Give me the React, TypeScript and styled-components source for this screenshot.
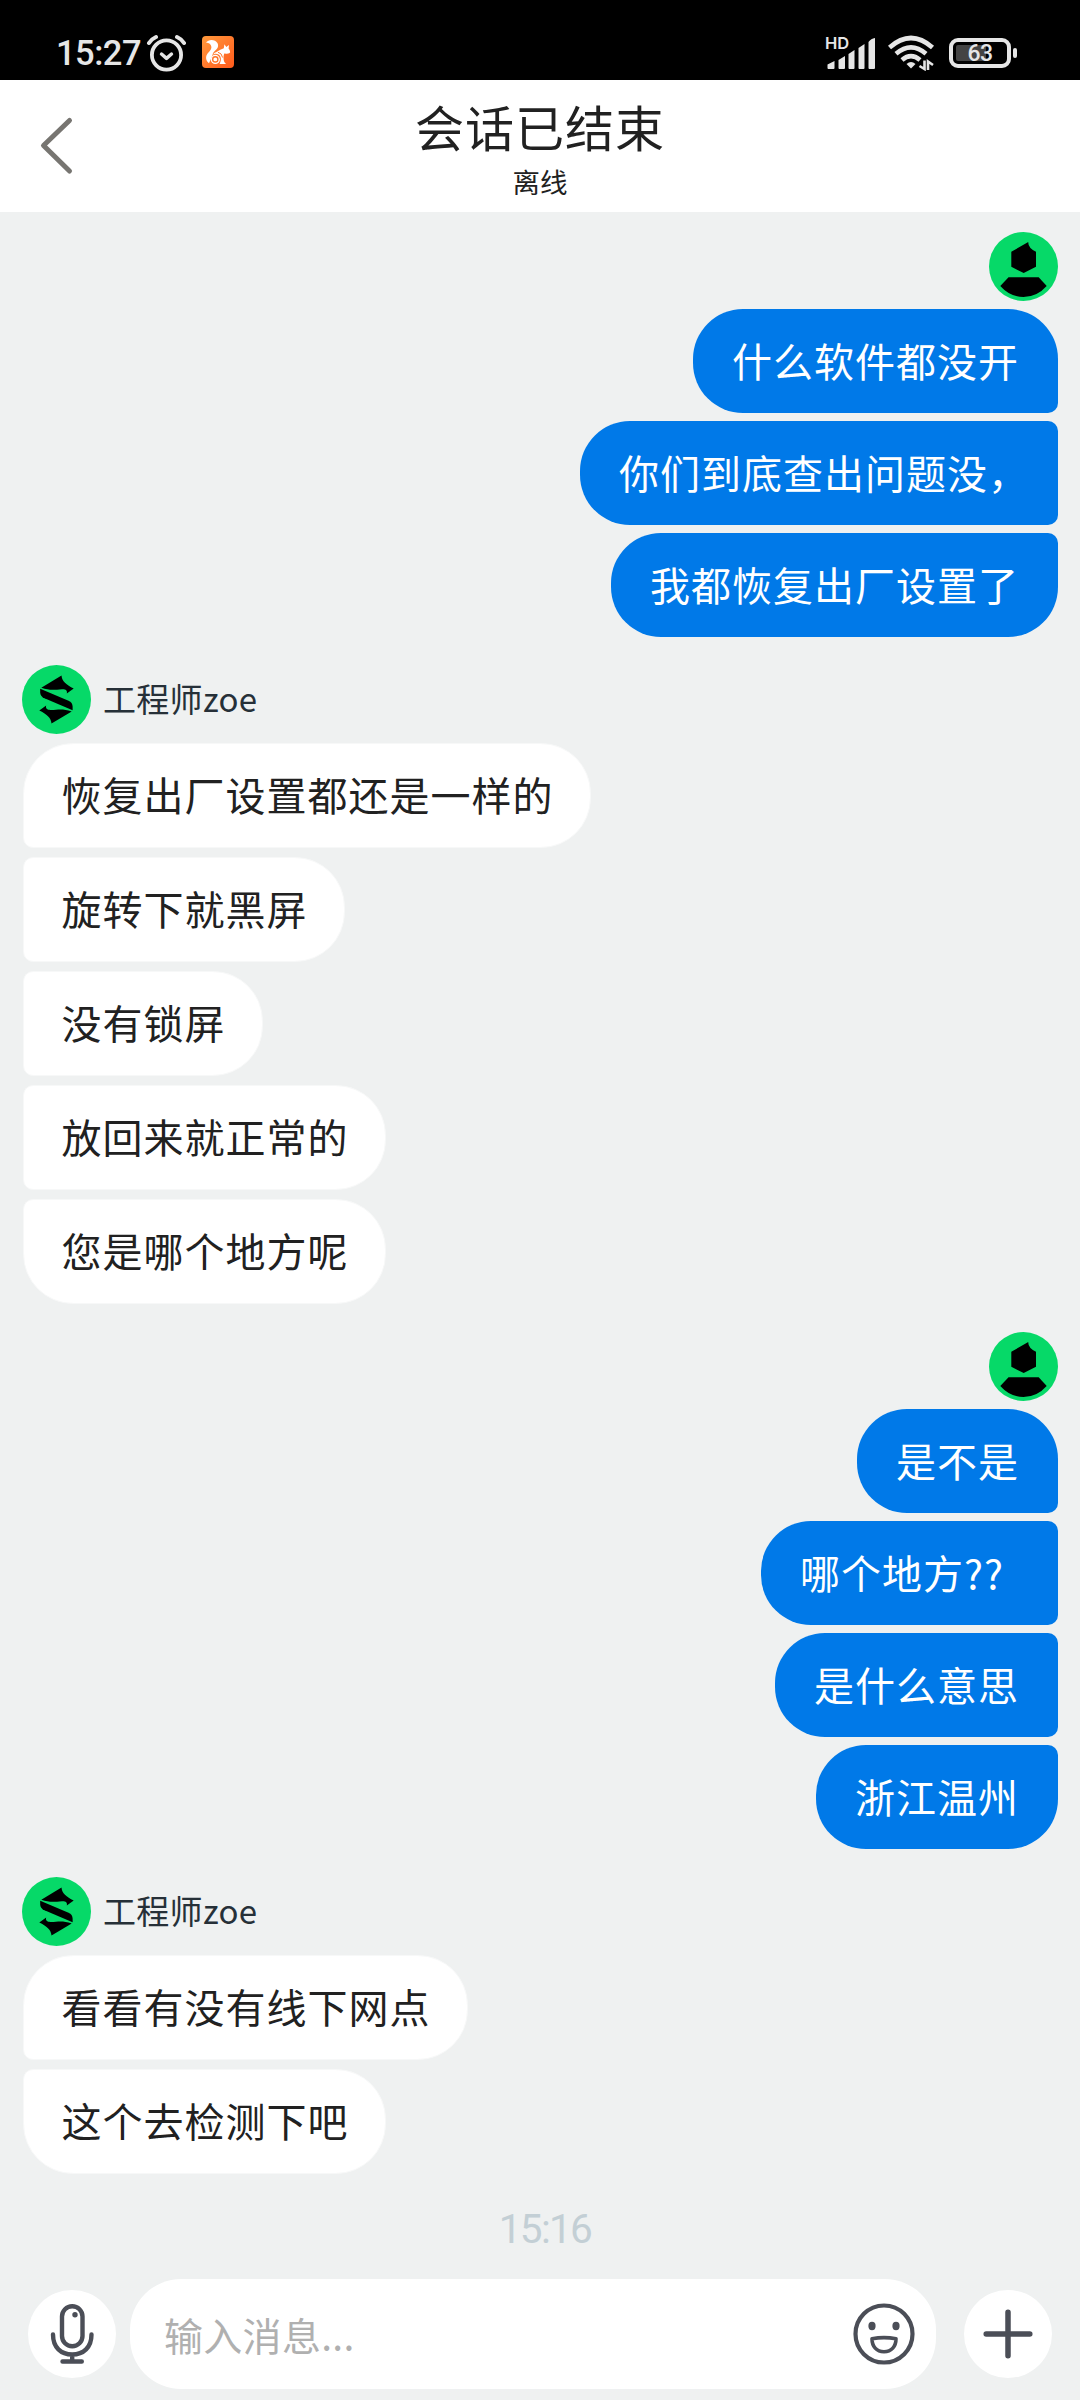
import React from "react";
import styled, { createGlobalStyle, css } from "styled-components";

const GlobalStyle = createGlobalStyle`
  * { box-sizing: border-box; }
  body {
    margin: 0;
    background: #eff1f1;
    font-family: "Noto Sans CJK SC", "Noto Sans", sans-serif;
  }
`;

const Screen = styled.div`
  display: flex;
  flex-direction: column;
  width: 1080px;
  height: 2400px;
  background: #eff1f1;
  overflow: hidden;
`;

const StatusBar = styled.div`
  display: flex;
  justify-content: space-between;
  flex: none;
  height: 80px;
  padding: 32px 62px 0 56px;
  background: #000;
  color: #e6e6e6;
`;

const StatusGroup = styled.div`
  display: flex;
  align-items: center;
  height: 42px;
`;

const Clock = styled.span`
  width: 90px;
  font: 500 34.5px/42px Roboto, sans-serif;
  letter-spacing: -0.5px;
`;

const UcIcon = styled.svg`
  margin: 0 0 2px 16px;
`;

const Header = styled.header`
  display: grid;
  grid-template-columns: 110px 1fr 110px;
  flex: none;
  height: 132px;
  background: #fff;
  color: #212121;
`;

const BackButton = styled.button`
  display: flex;
  padding: 36px 0 0 38px;
  border: 0;
  background: none;
`;

const Titles = styled.div`
  display: flex;
  flex-direction: column;
  align-items: center;
  padding-top: 14px;
`;

const Title = styled.h1`
  margin: 0;
  font-size: 49px;
  line-height: 64px;
  font-weight: 400;
  letter-spacing: 1px;
`;

const Subtitle = styled.div`
  font-size: 27.5px;
  line-height: 40px;
  margin-top: 3px;
`;

const Chat = styled.main`
  display: flex;
  flex-direction: column;
  flex: none;
  gap: 28px;
  height: 1962px;
  padding: 20px 22px 0;
`;

const Group = styled.section<{ $mine?: boolean }>`
  display: flex;
  flex-direction: column;
  align-items: ${(p) => (p.$mine ? "flex-end" : "flex-start")};
  gap: ${(p) => (p.$mine ? "8px" : "9px")};
`;

const Sender = styled.div`
  display: flex;
  align-items: center;
  gap: 12px;
  height: 69px;
  color: #263038;
  font-size: 33px;
  letter-spacing: 0.3px;
`;

const SenderName = styled.span`
  line-height: 48px;
  margin-bottom: 3px;
`;

const corner = (round: boolean) => (round ? "50px" : "10px");

const Bubble = styled.div<{ $mine?: boolean; $first: boolean; $last: boolean; $trim?: number }>`
  font-size: 40px;
  letter-spacing: 1px;
  white-space: nowrap;
  ${(p) =>
    p.$mine
      ? css`
          height: 104px;
          line-height: 103px;
          padding: 0 ${39 - (p.$trim ?? 0)}px 0 39px;
          color: #fff;
          background: #0079e8;
          border-radius: 50px ${corner(p.$first)} ${corner(p.$last)} 50px;
        `
      : css`
          height: 105px;
          line-height: 101px;
          margin-left: 1px;
          padding: 0 36.500px 0 37.500px;
          color: #212121;
          background: #fff;
          border: 1px solid #f7f8f8;
          border-radius: ${corner(p.$first)} 50px 50px ${corner(p.$last)};
        `}
`;

const Timestamp = styled.time`
  align-self: center;
  margin: 28px 0 0 10px;
  color: #c3cfd5;
  font: 400 40.5px/54px Roboto, sans-serif;
  letter-spacing: -1.7px;
`;

const Composer = styled.footer`
  display: flex;
  align-items: center;
  flex: none;
  height: 110px;
  margin-top: 23px;
  padding: 0 28px;
`;

const RoundButton = styled.button`
  display: flex;
  align-items: center;
  justify-content: center;
  flex: none;
  width: 88px;
  height: 88px;
  padding: 0;
  border: 0;
  border-radius: 50%;
  background: #fff;
`;

const InputPill = styled.div`
  display: flex;
  align-items: center;
  justify-content: space-between;
  flex: 1;
  height: 110px;
  margin: 0 28px 0 14px;
  padding: 0 21px 0 34px;
  border-radius: 51px;
  background: #fff;
`;

const Placeholder = styled.span`
  color: #b0b0b0;
  font-size: 39px;
  line-height: 60px;
  letter-spacing: 0.3px;
`;

const AlarmIcon = () => (
  <svg width="40" height="38" viewBox="0 0 40 38" fill="none" stroke="#e6e6e6" strokeLinecap="round">
    <circle cx="20.5" cy="21" r="14.6" strokeWidth="3.8" />
    <path d="M15.5 20l5 4.4 5-4.4" strokeWidth="3.4" strokeLinejoin="round" />
    <path d="M3 9Q5.5 5 10 3M38 9Q35.500 5 31 3" strokeWidth="4" />
  </svg>
);

const SquirrelIcon = () => (
  <UcIcon width="32" height="32" viewBox="0 0 32 32">
    <defs>
      <linearGradient id="uc" x1="0" y1="0" x2="1" y2="1">
        <stop offset="0" stopColor="#ff9a3d" />
        <stop offset="1" stopColor="#ff5a1c" />
      </linearGradient>
    </defs>
    <rect width="32" height="32" rx="4" fill="url(#uc)" />
    <path
      fill="#fff"
      d="M4 6.500C6 3.800 10 3.200 13 4.800 16.800 7 17 11 14.300 13.600 12.500 15.400 10.800 16.400 10.500 19L7 27.200C4.500 25.600 3.600 22.500 4.300 20 5.200 16.800 9.300 14.800 9.400 11.200 9.300 8.200 6.800 6.800 4 6.500Z"
    />
    <path
      fill="#fff"
      d="M15 15.800C17 14 19.500 13 21.800 12.200L22.400 8.200 24.300 11 27 9 26.600 12.500C27.700 13.800 28.200 15.200 28.100 16.400 26.500 17.800 24 17.800 22.300 17.600 21.200 20.200 21.300 23.500 22.300 26L24 28H17.500C19.500 24.500 19.500 20.500 16.500 18.500 14.500 17.200 12.500 17.500 11 18.500 12 17 13.400 16.200 15 15.800Z"
    />
    <path d="M16 16.300Q19.800 17 20.600 21.500" fill="none" stroke="#ff7427" strokeWidth="1" />
    <circle cx="13.300" cy="23.400" r="4.600" fill="#fff" />
    <circle cx="13.300" cy="23.400" r="2.600" fill="none" stroke="#ff7427" strokeWidth="1.400" />
  </UcIcon>
);

const SignalWrap = styled.div`
  position: relative;
  width: 51px;
  height: 34px;
  margin-right: 12px;
`;

const HdTag = styled.span`
  position: absolute;
  left: 0;
  top: 0;
  font: 600 16.5px/14px Inter, sans-serif;
`;

const Signal = () => (
  <SignalWrap>
    <HdTag>HD</HdTag>
    <svg width="51" height="34" viewBox="0 0 51 34" fill="#e6e6e6">
      <path d="M2.500 28.500L9.500 25V32Q9.500 33 8.500 33H3.500Q2.500 33 2.500 32ZM13.500 24L20 20V32Q20 33 19 33H14.500Q13.500 33 13.500 32ZM23.500 18L29.500 14V32Q29.500 33 28.500 33H24.500Q23.500 33 23.500 32ZM33.500 12L39.500 8V32Q39.500 33 38.500 33H34.500Q33.500 33 33.500 32ZM43.500 6Q46 2.500 50 2V32Q50 33 49 33H44.500Q43.500 33 43.500 32Z" />
    </svg>
  </SignalWrap>
);

const WifiIcon = () => (
  <svg width="47" height="36" viewBox="0 0 47 36" fill="none" stroke="#e6e6e6" strokeWidth="4.600">
    <path d="M1.500 12.500Q23 -6.500 44.500 12.500M8 18.800Q23 6 38 18.800M14 25Q23 17.300 32 25" />
    <path d="M18.500 29Q23 25 27.500 29L23 33.500Z" fill="#e6e6e6" stroke="none" />
    <path d="M36.500 25.500V34L31.500 31M40 35V26.500L45 30" strokeWidth="2.600" />
  </svg>
);

const Battery = styled.div`
  position: relative;
  display: flex;
  align-items: center;
  justify-content: center;
  width: 62px;
  height: 30px;
  margin: 0 7px 1px 14px;
  border: 4px solid #e6e6e6;
  border-radius: 9px;
  font: 500 23px/24px Roboto, sans-serif;

  &::before {
    content: "";
    position: absolute;
    left: 3px;
    top: 3px;
    width: 30px;
    height: 16px;
    border-radius: 2px;
    background: #444;
  }

  &::after {
    content: "";
    position: absolute;
    left: 60px;
    top: 6px;
    width: 4px;
    height: 10px;
    border-radius: 2px;
    background: #e6e6e6;
  }
`;

const BatteryLevel = styled.span`
  position: relative;
  margin-top: 2px;
  letter-spacing: -0.5px;
`;

const BackIcon = () => (
  <svg width="38" height="62" viewBox="0 0 38 62" fill="none" stroke="#777571" strokeWidth="5" strokeLinecap="round" strokeLinejoin="round">
    <path d="M31.500 4.500L5.500 29.500L31.500 55" />
  </svg>
);

const UserAvatar = () => (
  <svg width="69" height="69" viewBox="0 0 69 69">
    <circle cx="34.5" cy="34.5" r="34.5" fill="#06d968" />
    <path d="M22.300 19.800L39.300 10Q38.800 15.500 47 19.800V34.800L34.700 41L22.300 34.800Z" />
    <path d="M19.500 45.300H49.700L57.700 54Q48 65 34.500 65T11.300 54Z" />
  </svg>
);

const AGENT_TIP =
  "M19.300 22.800L39.500 10.600C39.800 16.500 44.500 20 51.700 23.600L44.800 28.600C45.700 25.300 43.500 24 40 24.200C32.500 24.700 28 25.800 19.300 22.800Z";

const AgentAvatar = () => (
  <svg width="69" height="69" viewBox="0 0 69 69">
    <circle cx="34.500" cy="34.500" r="34.500" fill="#06d968" />
    <path d={AGENT_TIP} />
    <path d={AGENT_TIP} transform="rotate(180 34.500 34.600)" />
    <path d="M18.200 23.800L46.500 35.800Q50.600 37.600 50.600 41.500V45.200L22.500 33.200Q18.200 31.300 18.200 27.500Z" />
  </svg>
);

const MicIcon = () => (
  <svg width="46" height="62" viewBox="0 0 46 62" fill="none" stroke="#4b4e57" strokeWidth="4.400" strokeLinecap="round">
    <rect x="13" y="3.200" width="20.500" height="40" rx="10.250" />
    <path d="M4 31.500C4 44.500 12 51.500 23.200 51.500S42.500 44.500 42.500 31.500M23.200 52V57M13.500 58.500H32.800" />
    <circle cx="26" cy="11.800" r="2.700" fill="#4b4e57" stroke="none" />
  </svg>
);

const SmileIcon = () => (
  <svg width="62" height="62" viewBox="0 0 62 62" fill="none" stroke="#4b4e57" strokeWidth="4.200">
    <circle cx="31" cy="31" r="28.500" />
    <ellipse cx="19" cy="23" rx="3.600" ry="4.200" fill="#4b4e57" stroke="none" />
    <ellipse cx="43" cy="23" rx="3.600" ry="4.200" fill="#4b4e57" stroke="none" />
    <path d="M19 35.700Q31 33.500 43 35.700C43 43.500 38.500 48.700 31 48.700S19 43.500 19 35.700Z" strokeWidth="3.600" strokeLinejoin="round" />
  </svg>
);

const PlusIcon = () => (
  <svg width="50" height="50" viewBox="0 0 50 50" fill="none" stroke="#4b4e57" strokeWidth="5.500" strokeLinecap="round">
    <path d="M25 3.200V46.800M3.200 25H46.800" />
  </svg>
);

type Message = { text: string; trim?: number };
type Thread = { from: "me" | "agent"; messages: Message[] };

const threads: Thread[] = [
  {
    from: "me",
    messages: [{ text: "什么软件都没开" }, { text: "你们到底查出问题没，", trim: 10 }, { text: "我都恢复出厂设置了" }],
  },
  {
    from: "agent",
    messages: [
      { text: "恢复出厂设置都还是一样的" },
      { text: "旋转下就黑屏" },
      { text: "没有锁屏" },
      { text: "放回来就正常的" },
      { text: "您是哪个地方呢" },
    ],
  },
  {
    from: "me",
    messages: [{ text: "是不是" }, { text: "哪个地方??", trim: -15 }, { text: "是什么意思" }, { text: "浙江温州" }],
  },
  {
    from: "agent",
    messages: [{ text: "看看有没有线下网点" }, { text: "这个去检测下吧" }],
  },
];

const MessageGroup = ({ from, messages }: Thread) => {
  const mine = from === "me";
  return (
    <Group $mine={mine}>
      <Sender>
        {mine ? <UserAvatar /> : <AgentAvatar />}
        {!mine && <SenderName>工程师zoe</SenderName>}
      </Sender>
      {messages.map((m, i) => (
        <Bubble key={m.text} $mine={mine} $first={i === 0} $last={i === messages.length - 1} $trim={m.trim}>
          {m.text}
        </Bubble>
      ))}
    </Group>
  );
};

export default function App() {
  return (
    <>
      <GlobalStyle />
      <Screen>
        <StatusBar>
          <StatusGroup>
            <Clock>15:27</Clock>
            <AlarmIcon />
            <SquirrelIcon />
          </StatusGroup>
          <StatusGroup>
            <Signal />
            <WifiIcon />
            <Battery>
              <BatteryLevel>63</BatteryLevel>
            </Battery>
          </StatusGroup>
        </StatusBar>
        <Header>
          <BackButton aria-label="返回">
            <BackIcon />
          </BackButton>
          <Titles>
            <Title>会话已结束</Title>
            <Subtitle>离线</Subtitle>
          </Titles>
        </Header>
        <Chat>
          {threads.map((t, i) => (
            <MessageGroup key={i} {...t} />
          ))}
        </Chat>
        <Timestamp>15:16</Timestamp>
        <Composer>
          <RoundButton aria-label="语音">
            <MicIcon />
          </RoundButton>
          <InputPill>
            <Placeholder>输入消息...</Placeholder>
            <SmileIcon />
          </InputPill>
          <RoundButton aria-label="更多">
            <PlusIcon />
          </RoundButton>
        </Composer>
      </Screen>
    </>
  );
}
